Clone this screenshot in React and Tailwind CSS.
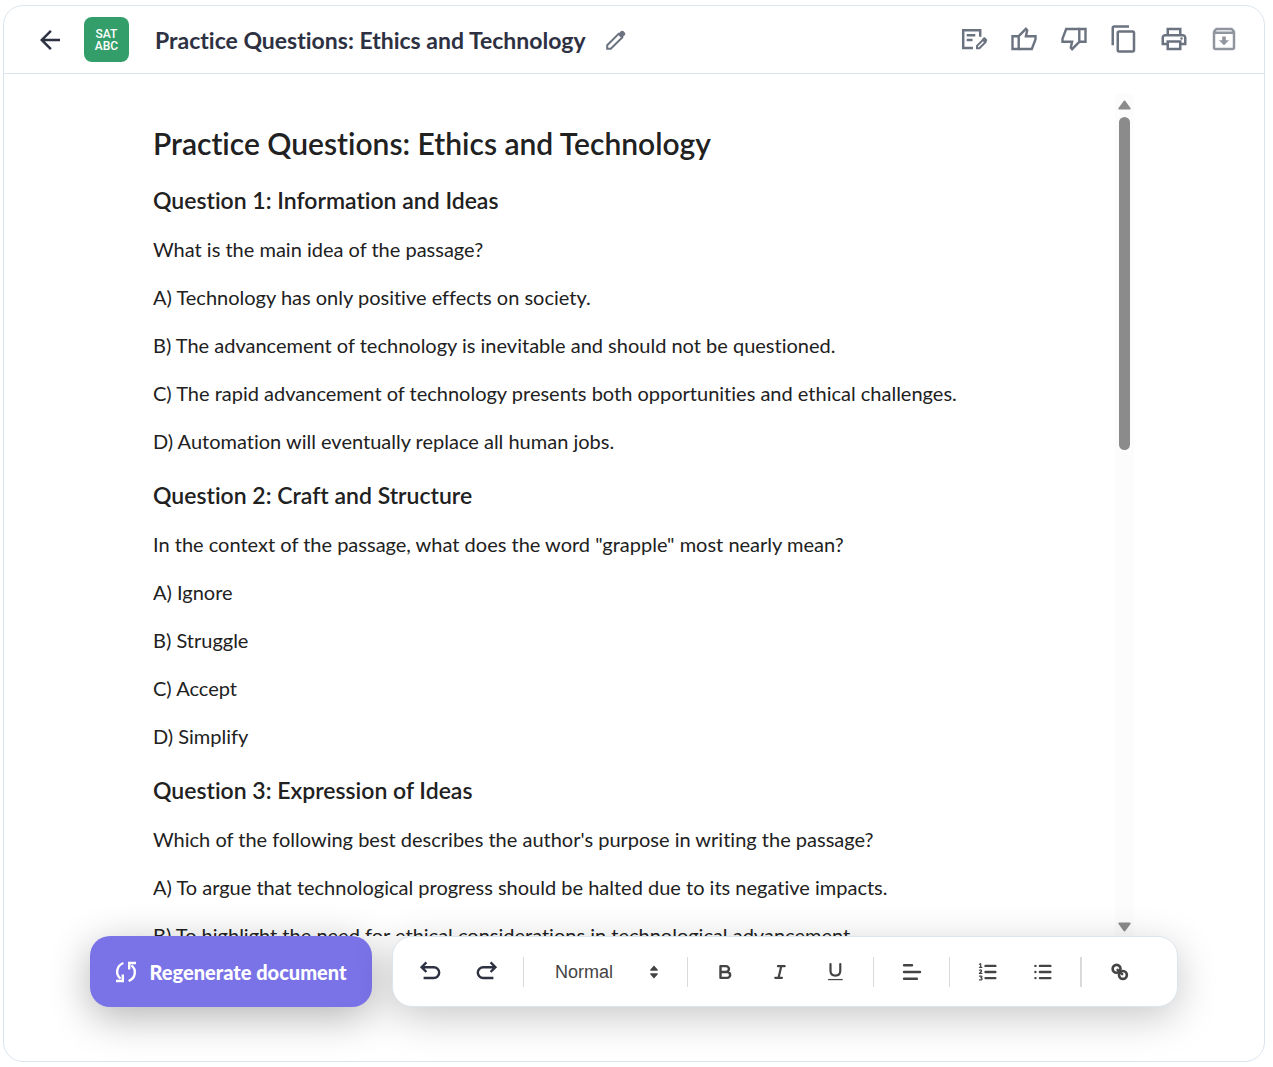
import { useState } from 'react';
import { MdArrowBack, MdContentCopy, MdOutlinePrint, MdOutlineArchive } from 'react-icons/md';

/* ── Icons ───────────────────────────────────────────── */
function PencilIcon() {
  return (
    <svg width="20" height="20" viewBox="0 0 20 20" fill="none" stroke="currentColor" strokeWidth="2">
      <path d="M1.2 18.8v-3.6L12.6 3.8l3.6 3.6L4.8 18.8z" />
      <path d="M12 4.2l2.8-2.900c.8-.8 2-.8 2.800 0l1.100 1.100c.8.8.8 2 0 2.800L15.800 8z" fill="currentColor" stroke="none" />
    </svg>
  );
}

function NoteEditIcon() {
  return (
    <svg width="30" height="30" viewBox="0 0 30 30" fill="none" stroke="currentColor" strokeWidth="2.5">
      <path d="M14 24H4.200V6.200h17v6.600" />
      <path d="M7.700 11.200h8.600M7.700 16h5.800" />
      <path d="M18 24.200v-2.400l6-6 2.400 2.400-6 6z" strokeWidth="2" />
      <path d="M22.800 15.400l1.600-1.600c.6-.6 1.400-.6 2 0l1.400 1.400c.6.6.6 1.400 0 2l-1.600 1.600z" fill="currentColor" stroke="none" />
    </svg>
  );
}

function ThumbIcon({ down }) {
  return (
    <svg width="30" height="30" viewBox="0 0 30 30" fill="none" stroke="currentColor" strokeWidth="2.4" className={down ? 'rotate-180' : ''}>
      <path d="M3.500 12.200h6.200V25H3.500z" />
      <path d="M9.700 12.200l7.200-7.400 1.300 1.500-1.300 5.900h9.600v3.200L22.800 25H9.700" />
    </svg>
  );
}

function RegenerateIcon() {
  return (
    <svg width="22" height="22" viewBox="0 0 22 22" fill="none" stroke="currentColor" strokeWidth="2.4">
      <path d="M8.400 2C1.200 4.800.2 13.400 5.600 17.600" />
      <path d="M1 20h6.800v-6.600" />
      <path d="M13.600 20c7.200-2.800 8.200-11.400 2.800-15.600" />
      <path d="M21 2h-6.800v6.600" />
    </svg>
  );
}

function UndoIcon({ flip }) {
  return (
    <svg width="22" height="22" viewBox="0 0 22 22" fill="none" stroke="currentColor" strokeWidth="2.4" className={flip ? '-scale-x-100' : ''}>
      <path d="M7.400 1.400L2.600 6.200l4.800 4.800M2.800 6.200h12a5.300 5.300 0 0 1 0 10.800H4.600" />
    </svg>
  );
}

// Toolbar glyphs share an 18-unit grid
function Glyph({ children }) {
  return (
    <svg width="22" height="22" viewBox="0 0 18 18" fill="none" stroke="currentColor" strokeWidth="2" strokeLinecap="round" strokeLinejoin="round">
      {children}
    </svg>
  );
}

/* ── Buttons ─────────────────────────────────────────── */
function HeaderButton({ label, children }) {
  return (
    <button type="button" aria-label={label} className="flex h-[50px] w-[50px] items-center justify-center text-[#6b7280]">
      {children}
    </button>
  );
}

function ToolButton({ label, children }) {
  return (
    <button type="button" aria-label={label} className="flex h-10 w-[55px] items-center justify-center">
      {children}
    </button>
  );
}

function ToolGroup({ children }) {
  return <div className="flex h-[30px] items-center border-l border-[#d9d9d9] px-[10px] last:border-l-2">{children}</div>;
}

/* ── Document data ───────────────────────────────────── */
const title = 'Practice Questions: Ethics and Technology';

const questions = [
  {
    heading: 'Question 1: Information and Ideas',
    lines: [
      'What is the main idea of the passage?',
      'A) Technology has only positive effects on society.',
      'B) The advancement of technology is inevitable and should not be questioned.',
      'C) The rapid advancement of technology presents both opportunities and ethical challenges.',
      'D) Automation will eventually replace all human jobs.',
    ],
  },
  {
    heading: 'Question 2: Craft and Structure',
    lines: [
      'In the context of the passage, what does the word "grapple" most nearly mean?',
      'A) Ignore',
      'B) Struggle',
      'C) Accept',
      'D) Simplify',
    ],
  },
  {
    heading: 'Question 3: Expression of Ideas',
    lines: [
      "Which of the following best describes the author's purpose in writing the passage?",
      'A) To argue that technological progress should be halted due to its negative impacts.',
      'B) To highlight the need for ethical considerations in technological advancement.',
    ],
  },
];

function Header() {
  return (
    <header className="flex h-[68px] shrink-0 items-center border-b border-[#dce5ee] pr-[15px] pl-[31px] text-[#2d3142]">
      <button type="button" aria-label="Back" className="flex w-[30px] justify-center">
        <MdArrowBack size={30} />
      </button>
      <div className="ml-[19px] flex h-[45px] w-[45px] flex-col items-center justify-center rounded-lg bg-[#349e6b] font-[Roboto,sans-serif] text-[12px] leading-3 font-medium text-white">
        <span>SAT</span>
        <span>ABC</span>
      </div>
      <div className="ml-[26px] text-[23px] leading-7 font-bold">{title}</div>
      <button type="button" aria-label="Rename" className="ml-5 text-[#6b7280]">
        <PencilIcon />
      </button>
      <div className="ml-auto flex pb-0.5">
        <HeaderButton label="Edit notes"><NoteEditIcon /></HeaderButton>
        <HeaderButton label="Like"><ThumbIcon /></HeaderButton>
        <HeaderButton label="Dislike"><ThumbIcon down /></HeaderButton>
        <HeaderButton label="Copy"><MdContentCopy size={30} /></HeaderButton>
        <HeaderButton label="Print"><MdOutlinePrint size={30} /></HeaderButton>
        <HeaderButton label="Download"><MdOutlineArchive size={30} className="opacity-75" /></HeaderButton>
      </div>
    </header>
  );
}

function Scrollbar() {
  return (
    <div className="flex w-[19px] shrink-0 flex-col items-center bg-[#fcfcfc] pt-[6px] pb-1 text-[#8b8b8b]">
      <svg width="13" height="10" viewBox="0 0 13 10" fill="currentColor">
        <path d="M5.500 1.200q1-1.200 2 0l5 6.800q.6 1.600-1 1.600h-10q-1.600 0-1-1.600z" />
      </svg>
      <div className="mt-[7px] h-2/5 w-[11px] rounded-full bg-[#8b8b8b]" />
      <svg width="13" height="10" viewBox="0 0 13 10" fill="currentColor" className="mt-auto">
        <path d="M5.500 8.800q1 1.200 2 0l5-6.800q.6-1.600-1-1.600h-10q-1.600 0-1 1.600z" />
      </svg>
    </div>
  );
}

function Toolbar() {
  const [style, setStyle] = useState('Normal');

  return (
    <div className="flex items-center rounded-[20px] border border-[#dce5ee] bg-white pr-5 text-[#444] shadow-[0_10px_40px_rgba(0,0,0,0.22)]">
      <div className="flex gap-0.5 px-[9px] text-[#2d3142]">
        <ToolButton label="Undo"><UndoIcon /></ToolButton>
        <ToolButton label="Redo"><UndoIcon flip /></ToolButton>
      </div>
      <ToolGroup>
        <div className="relative flex w-[143px] items-center">
          <select
            aria-label="Text style"
            value={style}
            onChange={(e) => setStyle(e.target.value)}
            className="w-full appearance-none bg-transparent pl-[21px] font-['Liberation_Sans',sans-serif] text-[18px] leading-6 outline-none"
          >
            <option>Normal</option>
            <option>Heading 1</option>
            <option>Heading 2</option>
          </select>
          <svg width="10" height="14" viewBox="0 0 10 14" fill="currentColor" className="pointer-events-none absolute right-[18px]">
            <path d="M5 .6l3.800 4.200q.4 1-.8 1H2q-1.200 0-.8-1zM5 13.400l3.800-4.200q.4-1-.8-1H2q-1.200 0-.8 1z" />
          </svg>
        </div>
      </ToolGroup>
      <ToolGroup>
        <ToolButton label="Bold">
          <Glyph><path d="M4.500 4.200h4.500a2.400 2.400 0 0 1 0 4.800H4.500zM4.500 9h5.500a2.400 2.400 0 0 1 0 4.800H4.500z" /></Glyph>
        </ToolButton>
        <ToolButton label="Italic">
          <Glyph><path d="M6.500 4.200h5.500M4.300 13.800h5.500M7 13.800l2.200-9.600" strokeWidth="1.800" /></Glyph>
        </ToolButton>
        <ToolButton label="Underline">
          <Glyph>
            <path d="M4.500 2.500v5.500c0 2.400 1.500 4 4 4s4-1.600 4-4V2.500" strokeWidth="1.800" />
            <path d="M2.500 15.200h12" strokeWidth="1" strokeLinecap="butt" />
          </Glyph>
        </ToolButton>
      </ToolGroup>
      <ToolGroup>
        <ToolButton label="Align">
          <Glyph><path d="M2.500 3.500h6.500M2.500 9h13M2.500 14.500h10.500" /></Glyph>
        </ToolButton>
      </ToolGroup>
      <ToolGroup>
        <ToolButton label="Numbered list">
          <Glyph>
            <path d="M7 4h8M7 9h8M7 14h8" />
            <path d="M2 5.200h2M3 5.200v-3l-1 .5M2 7.600c1.500-.8 2.500.3 1 1.400l-1 1.200h2M2 12.300h1.500c1 .5.6 1.200-.5 1.400 1.400.2 1.400 1.600.5 1.800H2" strokeWidth="1" />
          </Glyph>
        </ToolButton>
        <ToolButton label="Bulleted list">
          <Glyph><path d="M6.500 4h8.500M6.500 9h8.500M6.500 14h8.500M2.800 4h.01M2.800 9h.01M2.800 14h.01" /></Glyph>
        </ToolButton>
      </ToolGroup>
      <ToolGroup>
        <ToolButton label="Link">
          <Glyph>
            <circle cx="6.200" cy="6.400" r="3.200" strokeWidth="2.200" />
            <circle cx="11.400" cy="11.400" r="3.200" strokeWidth="2.200" />
            <path d="M7 7.200l3.800 3.600" strokeWidth="2" />
          </Glyph>
        </ToolButton>
      </ToolGroup>
    </div>
  );
}

export default function App() {
  return (
    <div className="flex h-screen flex-col bg-white pt-[5px] pr-2 pb-[5px] pl-[3px] font-[Lato,sans-serif] [font-variant-ligatures:none]">
      <div className="flex min-h-0 flex-1 flex-col rounded-[20px] border border-[#dce5ee]">
        <Header />

        <main className="mt-5 mr-[130px] ml-[149px] flex min-h-0 flex-1 overflow-hidden text-[#212121]">
          <article className="min-w-0 flex-1 overflow-hidden pt-[29px] pr-5 text-[20px] leading-7">
            <h1 className="mb-[21px] text-[30px] leading-10 font-semibold">{title}</h1>
            {questions.map((q) => (
              <section key={q.heading} className="mb-6">
                <h2 className="-mb-px text-[23px] leading-8 font-semibold">{q.heading}</h2>
                {q.lines.map((line) => (
                  <p key={line} className="mt-5">{line}</p>
                ))}
              </section>
            ))}
          </article>
          <Scrollbar />
        </main>

        <div className="relative z-10 mb-[54px] ml-[86px] flex h-[71px] shrink-0 gap-5">
          <button
            type="button"
            className="flex w-[282px] items-center justify-center gap-3 rounded-[20px] bg-[#7a73e8] text-[20px] font-black text-white shadow-[0_10px_40px_rgba(0,0,0,0.3)]"
          >
            <RegenerateIcon />
            Regenerate document
          </button>
          <Toolbar />
        </div>
      </div>
    </div>
  );
}
